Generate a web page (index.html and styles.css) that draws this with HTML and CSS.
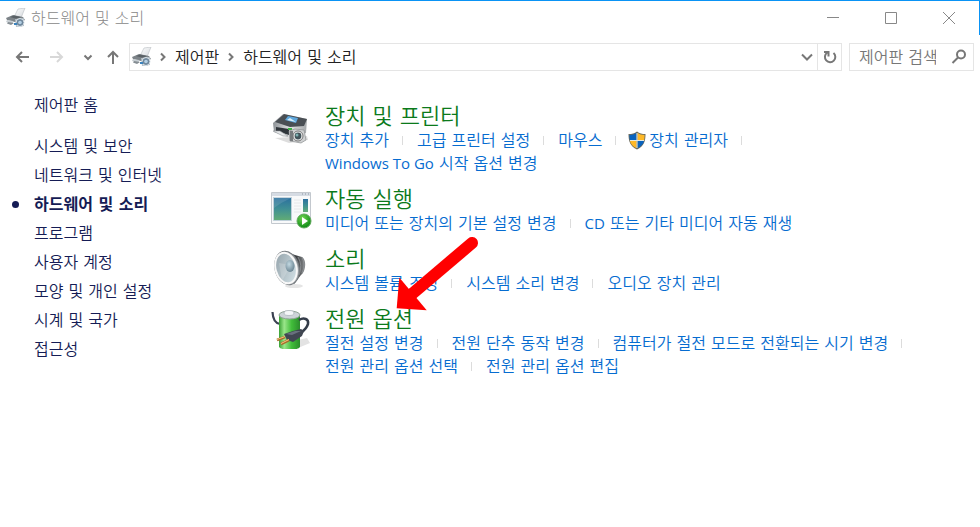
FILE: index.html
```html
<!DOCTYPE html>
<html lang="ko">
<head>
<meta charset="utf-8">
<meta name="viewport" content="width=device-width, initial-scale=1">
<title>하드웨어 및 소리</title>
<link rel="stylesheet" href="styles.css">
</head>
<body>
<svg class="defs" aria-hidden="true">
  <defs>
    <linearGradient id="paper" x1="0" y1="0" x2="1" y2="1"><stop offset="0" stop-color="#fff"/><stop offset="1" stop-color="#d4d8dc"/></linearGradient>
    <linearGradient id="body" x1="0" y1="0" x2="1" y2="0"><stop offset="0" stop-color="#8d9296"/><stop offset=".5" stop-color="#e4e5e6"/><stop offset="1" stop-color="#a5a8aa"/></linearGradient>
    <linearGradient id="screen" x1="0" y1="0" x2="0" y2="1"><stop offset="0" stop-color="#2b6f9f"/><stop offset=".5" stop-color="#3f8f94"/><stop offset="1" stop-color="#62ad74"/></linearGradient>
    <radialGradient id="play" cx=".4" cy=".3" r=".7"><stop offset="0" stop-color="#6fd44e"/><stop offset="1" stop-color="#0d8a16"/></radialGradient>
    <linearGradient id="cone" x1="0" y1="0" x2="1" y2="1"><stop offset="0" stop-color="#8f9ea6"/><stop offset="1" stop-color="#d9e7ec"/></linearGradient>
    <radialGradient id="dome" cx=".4" cy=".35" r=".7"><stop offset="0" stop-color="#c3d9e2"/><stop offset="1" stop-color="#67818f"/></radialGradient>
    <linearGradient id="magnet" x1="0" y1="0" x2="1" y2="0"><stop offset="0" stop-color="#74777a"/><stop offset=".5" stop-color="#3b3e41"/><stop offset="1" stop-color="#8a8d8f"/></linearGradient>
    <linearGradient id="cell" x1="0" y1="0" x2="1" y2="0"><stop offset="0" stop-color="#3aa235"/><stop offset=".25" stop-color="#9ae68a"/><stop offset=".6" stop-color="#41bd3a"/><stop offset="1" stop-color="#2b8c2c"/></linearGradient>
    <symbol id="hardware" viewBox="0 0 20 20">
      <path d="M8 9 12 1 19 0 15 10z" fill="url(#paper)" stroke="#b9bec2" stroke-width=".6"/>
      <path d="M0 10 7 7 17 9 19 12 13 15 1 12z" fill="#7d8489"/>
      <path d="M4 9 8 7.500 15 9 11 11z" fill="#5a6166"/>
      <path d="M1 12 7 13 7 16 0 14z" fill="#c6cdd2"/>
      <path d="M2 14 8 15 5 17 1 15.500z" fill="#858d93"/>
      <path d="M9 11 18 10 18 18 10 19z" fill="#b3bdc5"/>
      <circle cx="14" cy="14.500" r="4" fill="#6f879c" stroke="#dce4e9"/>
      <circle cx="14" cy="14.500" r="1.800" fill="#b3d0e4"/>
      <path d="M8 15h3v2H8z" fill="#3c83bd"/>
    </symbol>
    <symbol id="crumb" viewBox="0 0 8 10"><path d="M2 1.500 5.500 5 2 8.500" fill="none" stroke="#777" stroke-width="2"/></symbol>
  </defs>
</svg>

<div class="window">
  <header class="titlebar">
    <svg class="app-icon"><use href="#hardware"/></svg>
    <h1 class="caption">하드웨어 및 소리</h1>
    <div class="window-buttons">
      <button type="button" aria-label="최소화"><svg viewBox="0 0 12 12"><path d="M0 5.500h12" /></svg></button>
      <button type="button" aria-label="최대화"><svg viewBox="0 0 12 12"><path d="M.5.500h11v11H.500z"/></svg></button>
      <button type="button" aria-label="닫기"><svg viewBox="0 0 12 12"><path d="M0 0 12 12M12 0 0 12"/></svg></button>
    </div>
  </header>

  <div class="toolbar">
    <div class="history">
      <button type="button" aria-label="뒤로"><svg viewBox="0 0 14 14"><path d="M14 7H2M7 2 2 7l5 5"/></svg></button>
      <button type="button" class="disabled" aria-label="앞으로" disabled><svg viewBox="0 0 14 14"><path d="M0 7h12M7 2l5 5-5 5"/></svg></button>
      <button type="button" class="recent" aria-label="최근 위치"><svg viewBox="0 0 14 14"><path d="M3.500 5.500 7 9l3.500-3.500"/></svg></button>
      <button type="button" class="up" aria-label="위로"><svg viewBox="0 0 14 14"><path d="M7 14V2M2 7l5-5 5 5"/></svg></button>
    </div>
    <nav class="address" aria-label="주소">
      <svg class="app-icon"><use href="#hardware"/></svg>
      <svg class="crumb"><use href="#crumb"/></svg>
      <a href="#">제어판</a>
      <svg class="crumb"><use href="#crumb"/></svg>
      <a href="#">하드웨어 및 소리</a>
      <button type="button" class="drop" aria-label="이전 위치"><svg viewBox="0 0 14 14"><path d="M2 4.500 7 9.500l5-5"/></svg></button>
      <button type="button" class="refresh" aria-label="새로 고침"><svg viewBox="0 0 14 14"><path d="M10.500 3A5.200 5.200 0 1 1 4 2.800M1 2h4.500v4.500"/></svg></button>
    </nav>
    <form class="search">
      <input type="search" aria-label="제어판 검색" placeholder="제어판 검색">
      <button type="button" aria-label="검색"><svg viewBox="0 0 16 16"><circle cx="10" cy="5.500" r="4"/><path d="M7 8.500 1.500 14"/></svg></button>
    </form>
  </div>

  <div class="columns">
    <nav class="sidebar" aria-label="범주">
      <a class="home" href="#">제어판 홈</a>
      <a href="#">시스템 및 보안</a>
      <a href="#">네트워크 및 인터넷</a>
      <a class="current" href="#" aria-current="page">하드웨어 및 소리</a>
      <a href="#">프로그램</a>
      <a href="#">사용자 계정</a>
      <a href="#">모양 및 개인 설정</a>
      <a href="#">시계 및 국가</a>
      <a href="#">접근성</a>
    </nav>

    <main class="groups">
      <section class="group">
        <svg class="group-icon" viewBox="-1 -2 42 42">
          <path d="M4 32 18 37 37 34 36 30z" fill="#ddd"/>
          <path d="M2 17 12 8 36 13 35 27 19 32 3 26z" fill="url(#body)"/>
          <path d="M4 16 13 8 36 13 33 20 19 21z" fill="#4a4f54"/>
          <path d="M14 14 17 10 27 12 25 17z" fill="#5fa7dc"/>
          <path d="M16 14 19 12 25 16z" fill="#d9f0fb"/>
          <path d="M5 21 18 23 18 29 5 25z" fill="#30363b"/>
          <path d="M2 25 9 25 17 30 12 30z" fill="#e6e8ea" stroke="#94999c" stroke-width=".6"/>
          <path d="M17 22h4v2h-4z" fill="#39b443"/>
          <path d="M18 25 24 23 33 24 35 34 30 37 19 35z" fill="#cfd1d2" stroke="#8c8f91" stroke-width=".7"/>
          <path d="M19 25h3v10h-3z" fill="#777b7e"/>
          <circle cx="27" cy="30" r="5" fill="#f1f2f2" stroke="#777"/>
          <circle cx="27" cy="30" r="3.400" fill="#43545b"/>
          <circle cx="26" cy="29" r="1.500" fill="#7eb1b1"/>
        </svg>
        <div>
          <h2><a href="#">장치 및 프린터</a></h2>
          <ul class="tasks">
            <li><a href="#">장치 추가</a></li>
            <li><a href="#">고급 프린터 설정</a></li>
            <li><a href="#">마우스</a></li>
            <li class="admin">
              <svg class="shield" viewBox="0 0 18 19">
                <path d="M9 .500C11.500 2.500 14 3 17.500 3 17.500 10 16 15.500 9 18.500 2 15.500.500 10 .500 3 4 3 6.500 2.500 9 .500z" fill="#6b6b5e"/>
                <path d="M8.500 1.800V9H1.800C1.500 7 1.400 5.500 1.400 4 4.500 3.900 6.500 3.300 8.500 1.800z" fill="#0a63bd"/>
                <path d="M9.500 1.800V9h6.700c.3-2 .4-3.500.4-5-3.100-.1-5.100-.7-7.100-2.200z" fill="#fdb827"/>
                <path d="M8.500 10v7.300C4.500 15.500 2.700 13 2 10z" fill="#fdb827"/>
                <path d="M9.500 10v7.300C13.500 15.500 15.300 13 16 10z" fill="#0a63bd"/>
                <path d="M9 2v15M2 9.500h14" stroke="#e6e9df"/>
              </svg>
              <a href="#">장치 관리자</a>
            </li>
            <li><a href="#"><span class="latin">Windows To Go</span> 시작 옵션 변경</a></li>
          </ul>
        </div>
      </section>

      <section class="group">
        <svg class="group-icon" viewBox="-1 0 42 42">
          <path d="M.500 5.500h39v31H.500z" fill="#f8f9fa" stroke="#c3c8ce"/>
          <path d="M1 6h38v3H1z" fill="#d5dbe3"/>
          <path d="M31 7h1m2 0h1m2 0h1" stroke="#8b95a1"/>
          <path d="M2.500 10.500h18v23h-18z" fill="url(#screen)" stroke="#bfd0da"/>
          <path d="M3 21Q11 15 20 11v-1H3z" fill="#fff" opacity=".12"/>
          <path d="M23 13h7m-7 3h7m-7 3h7m-7 3h7m-7 3h7" stroke="#e6e8ea"/>
          <path d="M32 12h5v13h-5z" fill="url(#screen)"/>
          <circle cx="33" cy="34" r="7" fill="url(#play)" stroke="#61a95c"/>
          <path d="M31 30 37 34 31 38z" fill="#fff"/>
        </svg>
        <div>
          <h2><a href="#">자동 실행</a></h2>
          <ul class="tasks">
            <li><a href="#">미디어 또는 장치의 기본 설정 변경</a></li>
            <li><a href="#"><span class="latin">CD</span> 또는 기타 미디어 자동 재생</a></li>
          </ul>
        </div>
      </section>

      <section class="group">
        <svg class="group-icon" viewBox="-1 -1 42 42">
          <ellipse cx="23" cy="38" rx="9" ry="2" fill="#e5e5e5"/>
          <path d="M16 4 24 7 31 9Q35 12 34 19 33 25 30 27L23 36z" fill="url(#magnet)"/>
          <path d="M27 9Q32 17 28 27M31 9Q35 17 31 25" fill="none" stroke="#929699" stroke-width=".8"/>
          <ellipse cx="16" cy="20" rx="12" ry="17" transform="rotate(-14 16 20)" fill="#a0a5a8" stroke="#777c80"/>
          <ellipse cx="15" cy="20" rx="10.500" ry="15.500" transform="rotate(-14 15 20)" fill="url(#cone)" stroke="#f8f8f8" stroke-width="2"/>
          <path d="M8 15 20 17 11 33z" fill="#fff" opacity=".18"/>
          <ellipse cx="19" cy="18" rx="4.500" ry="6" fill="url(#dome)"/>
        </svg>
        <div>
          <h2><a href="#">소리</a></h2>
          <ul class="tasks">
            <li><a href="#">시스템 볼륨 조정</a></li>
            <li><a href="#">시스템 소리 변경</a></li>
            <li><a href="#">오디오 장치 관리</a></li>
          </ul>
        </div>
      </section>

      <section class="group">
        <svg class="group-icon" viewBox="-1 -2 42 42">
          <path d="M27 39 39 34 36 29 27 31z" fill="#e3e3e3"/>
          <path d="M1.500 3Q2 14 9 15" fill="none" stroke="#3b4252" stroke-width="2.200"/>
          <path d="M8 6v32c3 4 18 4 21 0V6z" fill="url(#cell)"/>
          <ellipse cx="18.500" cy="6" rx="10.500" ry="4" fill="#cdd3d8" stroke="#8fa396"/>
          <ellipse cx="18" cy="4" rx="5" ry="2.500" fill="#f4f6f8" stroke="#a7afb7" stroke-width=".7"/>
          <path d="M28 11C33 8 38 10 37 15 35 21 32 22 29 24" fill="none" stroke="#343c49" stroke-width="2.500"/>
          <path d="M13 25 22 22 30 20 33 22 31 27 22 33 16 31z" fill="#414752"/>
          <path d="M15 25 24 22 30 22 21 26z" fill="#69717e"/>
          <path d="M14 28 6 31M18 31 10 35" stroke="#a86b2b" stroke-width="2.800"/>
          <path d="M14 27.500 6 30.500M18 30.500 10 34.500" stroke="#f5c77e"/>
        </svg>
        <div>
          <h2><a href="#">전원 옵션</a></h2>
          <ul class="tasks">
            <li><a href="#">절전 설정 변경</a></li>
            <li><a href="#">전원 단추 동작 변경</a></li>
            <li><a href="#">컴퓨터가 절전 모드로 전환되는 시기 변경</a></li>
            <li><a href="#">전원 관리 옵션 선택</a></li>
            <li><a href="#">전원 관리 옵션 편집</a></li>
          </ul>
        </div>
        <svg class="pointer" viewBox="0 0 84 76" aria-hidden="true">
          <path d="M76 8 16 59" stroke="#f00" stroke-width="12" stroke-linecap="round"/>
          <path d="M.700 73.200 3.300 42.500 30.700 75.200z" fill="#f00"/>
        </svg>
      </section>
    </main>
  </div>
</div>
</body>
</html>
```
FILE: styles.css
```css
* { box-sizing: border-box; }

body {
  margin: 0;
  background: #fff;
  color: #222;
  font: 350 16px/23px "DejaVu Sans", "Noto Sans CJK KR", sans-serif;
}

a { color: inherit; text-decoration: none; }
a:hover { text-decoration: underline; }

button {
  display: flex;
  align-items: center;
  justify-content: center;
  padding: 0;
  border: 0;
  background: none;
}

button svg {
  width: 14px;
  height: 14px;
  fill: none;
  stroke: #777;
  stroke-width: 2;
}

.defs { position: absolute; width: 0; height: 0; }
.latin { font-family: "Open Sans", sans-serif; font-size: 15px; font-weight: 400; }

.window { min-height: 100vh; border-top: 1px solid #0a93f5; }

/* Title bar */
.titlebar {
  display: flex;
  align-items: center;
  height: 34px;
  padding-left: 6px;
  border-right: 1px solid #0a93f5;
}

.app-icon { flex: none; width: 20px; height: 20px; }

.caption {
  flex: 1;
  margin: 0 0 0 5px;
  color: #888;
  font-size: 16px;
  font-weight: 300;
}

.window-buttons { display: flex; padding-right: 1px; }
.window-buttons button { width: 58px; height: 34px; }
.window-buttons svg { width: 12px; height: 12px; stroke: #888; stroke-width: 1; }

/* Navigation, address and search */
.toolbar {
  display: flex;
  padding: 8px 6px 0 8px;
}

.history { display: flex; flex: none; }
.history button { width: 27px; }
.history .disabled { width: 44px; }
.history .recent { width: 18px; }
.history .up { width: 32px; }
.history .disabled svg { stroke: #d8d8d8; }

.address, .search {
  display: flex;
  align-items: center;
  height: 28px;
  border: 1px solid #e5e5e5;
}

.address { flex: 1; padding-left: 2px; white-space: nowrap; }
.crumb { flex: none; width: 8px; height: 10px; margin: 0 8px 0 7px; }
.address a + .crumb { margin: 0 8px; }
.drop { width: 20px; margin-left: auto; }
.refresh { width: 24px; height: 26px; border-left: 1px solid #e5e5e5; }

.search { width: 125px; margin-left: 7px; padding: 0 6px 0 9px; }
.search input {
  flex: 1;
  min-width: 0;
  padding: 0;
  border: 0;
  outline: 0;
  background: none;
  font: inherit;
}
.search input::placeholder { color: #777; }
.search button svg { width: 16px; height: 16px; }

/* Page body */
.columns { display: flex; padding-top: 20px; }

.sidebar {
  display: flex;
  flex: none;
  flex-direction: column;
  width: 270px;
  padding-left: 34px;
  color: #151c55;
  line-height: 29px;
}
.home { margin-bottom: 12px; }
.current { position: relative; font-weight: 700; }
.current::before {
  content: "";
  position: absolute;
  top: 11px;
  left: -22px;
  width: 7px;
  height: 7px;
  border-radius: 50%;
  background: #151c55;
}

.groups {
  display: flex;
  flex: 1;
  flex-direction: column;
  gap: 12px;
  min-width: 0;
  padding: 13px 40px 20px 0;
}

.group { position: relative; display: flex; gap: 13px; }
.group-icon { flex: none; width: 42px; height: 42px; }

h2 {
  margin: 0;
  color: #0b7a1b;
  font-size: 22px;
  font-weight: 350;
  line-height: 25px;
}

.tasks {
  display: flex;
  flex-wrap: wrap;
  margin: 0;
  padding: 0;
  color: #066cd0;
  list-style: none;
}
.tasks li { display: flex; align-items: center; white-space: nowrap; }
.tasks li:not(:last-child)::after {
  content: "";
  width: 1px;
  height: 9px;
  margin: 0 14px 0 13px;
  background: #dcdcdc;
}
.shield { width: 18px; height: 19px; margin: 0 3px 0 -2px; }

/* Red arrow laid over the list, pointing at the power options heading */
.pointer {
  position: absolute;
  top: -72px;
  left: 126px;
  width: 84px;
  height: 76px;
}
```
